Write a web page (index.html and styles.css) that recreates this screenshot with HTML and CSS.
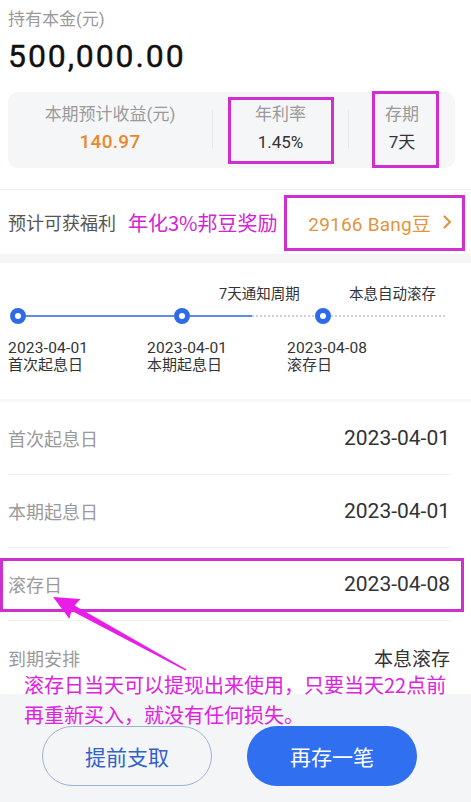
FILE: index.html
```html
<!DOCTYPE html>
<html lang="zh-CN">
<head>
<meta charset="utf-8">
<title>持有详情</title>
<link rel="stylesheet" href="styles.css">
</head>
<body>
<div class="page">
  <section class="summary">
    <div class="caption">持有本金(元)</div>
    <div class="amount">500,000.00</div>
    <div class="stats">
      <div class="stat">
        <div class="stat-label">本期预计收益(元)</div>
        <div class="stat-value orange">140.97</div>
      </div>
      <div class="vdiv"></div>
      <div class="stat">
        <div class="stat-label">年利率</div>
        <div class="stat-value">1.45%</div>
      </div>
      <div class="vdiv"></div>
      <div class="stat">
        <div class="stat-label">存期</div>
        <div class="stat-value">7天</div>
      </div>
    </div>
  </section>

  <section class="benefit">
    <span class="benefit-label">预计可获福利</span>
    <span class="note-inline">年化3%邦豆奖励</span>
    <span class="benefit-value">29166 Bang豆</span>
    <svg class="chev" width="9" height="14" viewBox="0 0 9 14"><polyline points="1.5,1.5 7,7 1.5,12.5" fill="none" stroke="#e0953f" stroke-width="2.2" stroke-linecap="round" stroke-linejoin="round"/></svg>
  </section>

  <div class="band"></div>

  <section class="timeline">
    <div class="tl-top">
      <span>7天通知周期</span>
      <span>本息自动滚存</span>
    </div>
    <div class="track">
      <span class="dot"></span>
      <span class="line solid w148"></span>
      <span class="dot"></span>
      <span class="line solid w62"></span>
      <span class="line dotted w63"></span>
      <span class="dot"></span>
      <span class="line dotted w114"></span>
    </div>
    <div class="tl-labels">
      <div class="tl-item w139"><div class="tl-date">2023-04-01</div><div class="tl-name">首次起息日</div></div>
      <div class="tl-item w140"><div class="tl-date">2023-04-01</div><div class="tl-name">本期起息日</div></div>
      <div class="tl-item"><div class="tl-date">2023-04-08</div><div class="tl-name">滚存日</div></div>
    </div>
  </section>

  <div class="band thin"></div>

  <section class="rows">
    <div class="row"><span class="row-label">首次起息日</span><span class="row-value num">2023-04-01</span></div>
    <div class="row"><span class="row-label">本期起息日</span><span class="row-value num">2023-04-01</span></div>
    <div class="row"><span class="row-label">滚存日</span><span class="row-value num">2023-04-08</span></div>
    <div class="row last"><span class="row-label">到期安排</span><span class="row-value">本息滚存</span></div>
  </section>

  <footer class="actions">
    <button class="btn btn-outline">提前支取</button>
    <button class="btn btn-fill">再存一笔</button>
  </footer>

  <div class="mark mark-rate"></div>
  <div class="mark mark-term"></div>
  <div class="mark mark-bang"></div>
  <div class="mark mark-roll"></div>
  <svg class="arrow" width="471" height="802" viewBox="0 0 471 802">
    <polygon points="53,597 80.5,599 74.6,605.6 186.6,669.4 185.4,670.6 71.4,610.8 69.5,619" fill="#e81ee8"/>
  </svg>
  <div class="note-bottom">滚存日当天可以提现出来使用，只要当天22点前<br>再重新买入，就没有任何损失。</div>
</div>
</body>
</html>
```

FILE: styles.css
```css
* { box-sizing: border-box; }
html, body { margin: 0; padding: 0; background: #fff; }
body {
  font-family: Roboto, "Noto Sans CJK SC", sans-serif;
  color: #333;
}
.page { position: relative; width: 471px; overflow: hidden; }

.summary { padding: 7px 16px 0 8px; }
.caption { font-size: 17px; line-height: 24px; color: #9a9a9a; }
.amount {
  margin-top: 5px;
  font-size: 32px; line-height: 40px; font-weight: 400;
  letter-spacing: 1.9px; color: #111;
  -webkit-text-stroke: 0.4px #111;
}
.stats {
  margin-top: 16px;
  display: grid;
  grid-template-columns: 204px 1px 135px 1px 1fr;
  align-items: center;
  background: #f5f6f8;
  border-radius: 10px;
  padding: 11px 0 14px;
}
.stat { text-align: center; }
.stat-label { font-size: 17px; line-height: 23px; color: #9a9a9a; }
.stat-value { margin-top: 4px; font-size: 17px; line-height: 24px; color: #333; }
.stat-value.orange { font-size: 19px; font-weight: 500; color: #e8892f; letter-spacing: 0.3px; }
.vdiv { width: 1px; height: 38px; background: #e6e7ea; }

.benefit {
  margin-top: 21px;
  border-top: 1px solid #f1f1f3;
  height: 65px;
  padding: 0 19px 0 8px;
  display: flex; align-items: center;
}
.benefit-label { font-size: 18px; color: #555; }
.note-inline { margin-left: 12px; font-size: 20px; color: #d424d4; font-family: "Noto Sans CJK SC", sans-serif; }
.benefit-value { margin-left: auto; font-size: 19px; color: #e0953f; letter-spacing: 0.2px; }
.chev { margin-left: 12px; }

.band { height: 9px; background: #f5f5f7; }
.band.thin { height: 3px; background: #f6f6f8; }

.timeline { padding: 22px 0 25px; }
.tl-top {
  padding-left: 219px;
  display: grid; grid-template-columns: 130px auto;
  font-size: 14.5px; line-height: 20px; color: #333;
}
.track {
  margin-top: 3px; height: 16px;
  padding-left: 10px;
  display: flex; align-items: center;
}
.dot {
  flex: none; width: 16px; height: 16px; border-radius: 50%;
  border: 5px solid #2f6be8; background: #fff;
}
.line { flex: none; height: 2px; }
.line.solid { background: #5f8ce8; }
.line.dotted { background: repeating-linear-gradient(90deg, #c9d2e4 0 2px, transparent 2px 4px); height: 1.5px; }
.w148 { width: 148px; } .w62 { width: 62px; } .w63 { width: 63px; } .w114 { width: 114px; }
.tl-labels { margin-top: 16px; padding-left: 8px; display: flex; }
.tl-item { flex: none; font-size: 15px; line-height: 17px; color: #333; }
.tl-date { font-size: 15.5px; letter-spacing: 0.2px; }
.w139 { width: 139px; } .w140 { width: 140px; }

.rows { margin: 0 19px 0 8px; }
.row {
  height: 73px;
  border-bottom: 1px solid #f1f1f3;
  display: flex; align-items: center; justify-content: space-between;
  padding-right: 2px;
}
.row.last { border-bottom: none; }
.row-label { font-size: 18px; color: #9a9a9a; }
.row-value { font-size: 19px; color: #333; }
.row-value.num { font-size: 21px; }

.actions {
  background: #f4f5f7;
  height: 108px;
  padding: 32px 0 0 42px;
  display: flex; gap: 35px;
}
.btn {
  width: 170px; height: 60px; border-radius: 30px;
  font-family: "Noto Sans CJK SC", sans-serif;
  font-size: 21px; cursor: pointer;
}
.btn-outline { background: transparent; border: 1.5px solid #9fb2d4; color: #3162c9; }
.btn-fill { background: #2f6ff0; border: none; color: #fff; }

.mark { position: absolute; border: 3px solid #cf2fcf; }
.mark-rate { left: 228px; top: 97px; width: 106px; height: 67px; }
.mark-term { left: 372px; top: 91px; width: 67px; height: 77px; }
.mark-bang { left: 284px; top: 195px; width: 181px; height: 56px; }
.mark-roll { left: 0; top: 558px; width: 464px; height: 54px; }
.arrow { position: absolute; left: 0; top: 0; pointer-events: none; }
.note-bottom {
  position: absolute; left: 24px; top: 670px;
  font-family: "Noto Sans CJK SC", sans-serif;
  font-size: 20px; line-height: 30px; color: #e021e0;
  white-space: nowrap;
}
```
